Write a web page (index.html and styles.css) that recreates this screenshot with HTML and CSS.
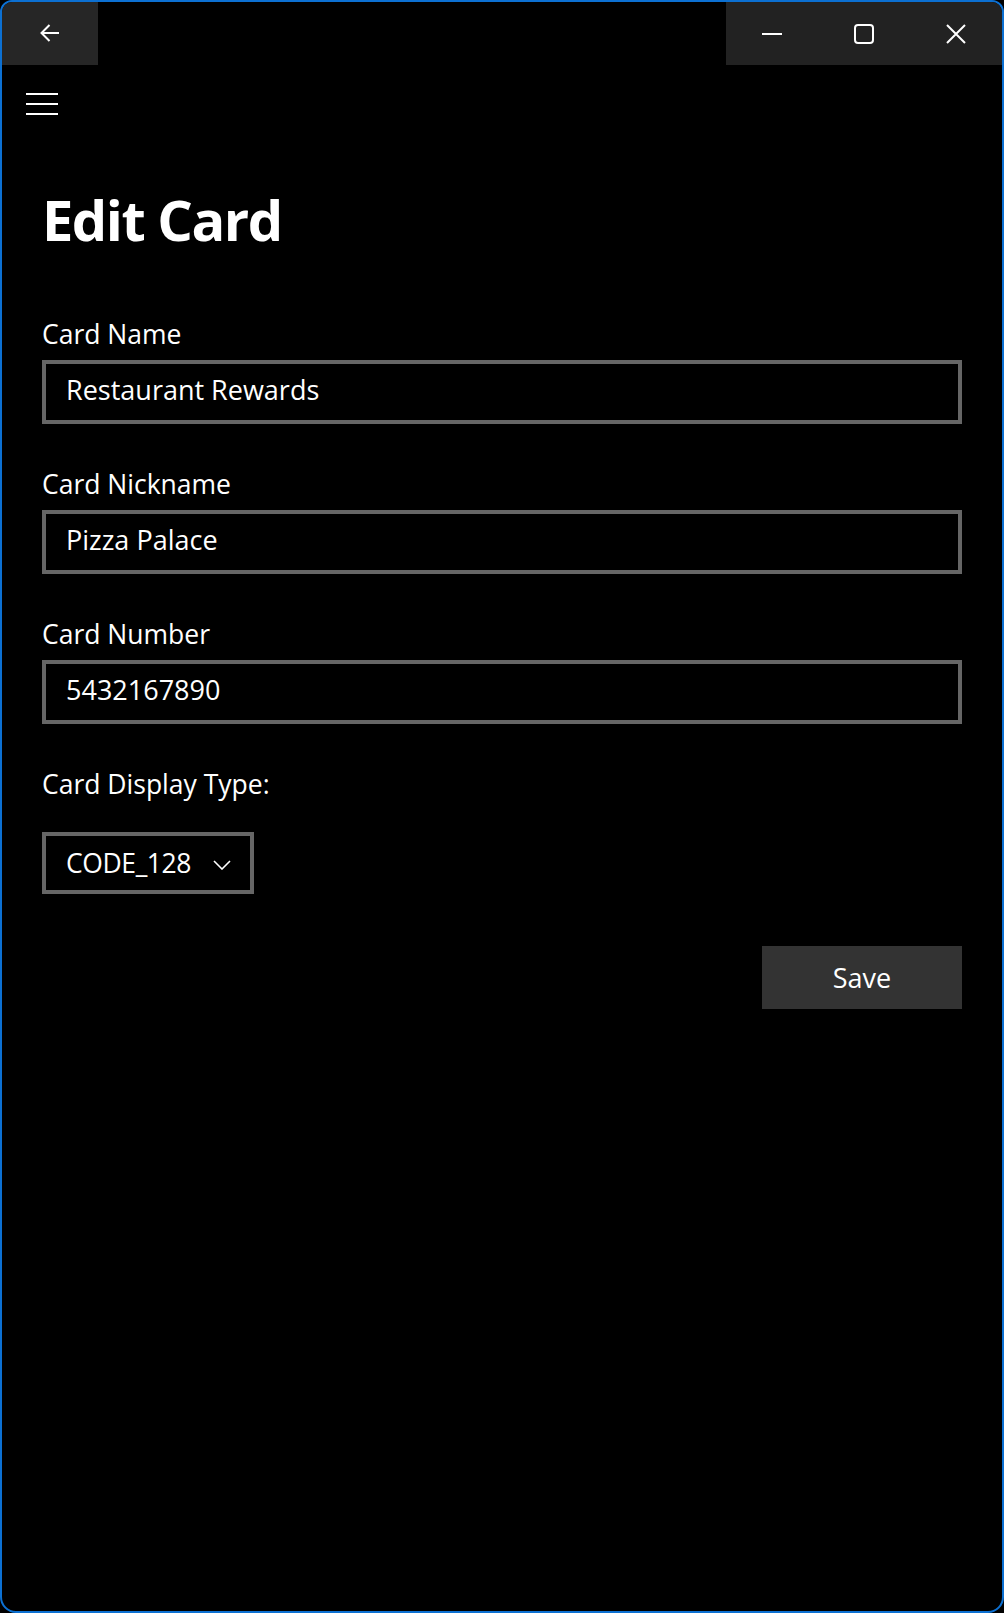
FILE: index.html
```html
<!DOCTYPE html>
<html lang="en">
<head>
<meta charset="utf-8">
<title>Edit Card</title>
<link rel="stylesheet" href="styles.css">
</head>
<body>
<div class="window">
  <div class="titlebar">
    <div class="back-btn">
      <svg width="20" height="20" viewBox="0 0 20 20"><path d="M19 10H1.5M9.5 2L1.5 10L9.5 18" fill="none" stroke="#fff" stroke-width="2"/></svg>
    </div>
    <div class="caption">
      <div class="cap-btn">
        <svg width="20" height="20" viewBox="0 0 20 20"><path d="M0 10H20" stroke="#fff" stroke-width="2"/></svg>
      </div>
      <div class="cap-btn">
        <svg width="20" height="20" viewBox="0 0 20 20"><rect x="1" y="1" width="18" height="18" rx="3" fill="none" stroke="#fff" stroke-width="2"/></svg>
      </div>
      <div class="cap-btn">
        <svg width="20" height="20" viewBox="0 0 20 20"><path d="M1 1L19 19M19 1L1 19" stroke="#fff" stroke-width="2"/></svg>
      </div>
    </div>
  </div>
  <div class="hamburger">
    <svg width="32" height="22" viewBox="0 0 32 22"><path d="M0 1H32M0 11H32M0 21H32" stroke="#fff" stroke-width="2"/></svg>
  </div>
  <main class="content">
    <h1 class="title">Edit Card</h1>
    <div class="field first">
      <div class="label">Card Name</div>
      <div class="textbox">Restaurant Rewards</div>
    </div>
    <div class="field">
      <div class="label">Card Nickname</div>
      <div class="textbox">Pizza Palace</div>
    </div>
    <div class="field">
      <div class="label">Card Number</div>
      <div class="textbox">5432167890</div>
    </div>
    <div class="field">
      <div class="label label-type">Card Display Type:</div>
      <div class="combo">
        <span class="combo-text">CODE_128</span>
        <svg class="chev" width="18" height="10" viewBox="0 0 18 10"><path d="M1 1L9 9L17 1" fill="none" stroke="#fff" stroke-width="1.6"/></svg>
      </div>
    </div>
    <div class="actions">
      <div class="save">Save</div>
    </div>
  </main>
</div>
</body>
</html>
```
FILE: styles.css
```css
html, body {
  margin: 0;
  padding: 0;
  background: #000;
}
body {
  font-family: "Open Sans", "Noto Sans", sans-serif;
  color: #fff;
}
.window {
  width: 1004px;
  height: 1613px;
  box-sizing: border-box;
  border: 2px solid #0c70d2;
  border-radius: 12px 12px 16px 16px;
  background: #000;
  overflow: hidden;
}
.titlebar {
  display: flex;
  height: 63px;
}
.back-btn {
  width: 96px;
  background: #262626;
  display: flex;
  align-items: center;
  justify-content: center;
}
.back-btn svg { margin-top: -1px; }
.caption {
  margin-left: auto;
  display: flex;
}
.cap-btn {
  width: 92px;
  background: #222222;
  display: flex;
  align-items: center;
  justify-content: center;
}
.hamburger {
  margin: 28px 0 0 24px;
  height: 22px;
}
.hamburger svg { display: block; }
.content {
  padding: 0 40px;
}
.title {
  margin: 64px 0 0 0;
  font-size: 56px;
  line-height: 80px;
  font-weight: 700;
  letter-spacing: -1.5px;
}
.label {
  font-size: 26.5px;
  line-height: 40px;
  margin-top: 40px;
}
.field.first .label { margin-top: 55px; }
.textbox {
  box-sizing: border-box;
  height: 64px;
  border: 4px solid #666666;
  padding: 0 20px;
  font-size: 27px;
  line-height: 51px;
  margin-top: 6px;
  white-space: nowrap;
}
.label-type { margin-bottom: 28px; }
.combo {
  box-sizing: border-box;
  display: flex;
  align-items: center;
  height: 62px;
  width: 212px;
  border: 4px solid #666666;
  padding: 0 19px 0 20px;
  font-size: 26.5px;
  line-height: 54px;
  letter-spacing: -0.4px;
}
.combo-text { white-space: nowrap; }
.chev { margin-left: auto; margin-top: 3px; flex: none; }
.actions {
  display: flex;
  justify-content: flex-end;
  margin-top: 52px;
}
.save {
  width: 200px;
  height: 63px;
  background: #333333;
  display: flex;
  align-items: center;
  justify-content: center;
  font-size: 27px;
}
```
